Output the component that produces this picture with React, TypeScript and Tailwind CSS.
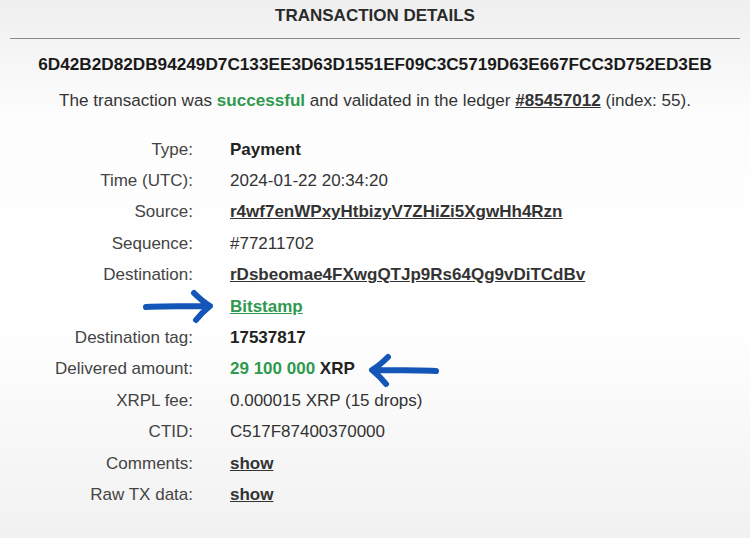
import { ReactNode } from 'react';

type Row = { label: string; value: ReactNode; arrow?: 'right' | 'left' };

const font = { fontFamily: '"Liberation Sans", Arial, sans-serif' };

// Hand-drawn style blue arrow
function Arrow({ dir }: { dir: 'right' | 'left' }) {
  return (
    <svg width="74" height="36" viewBox="0 0 74 36" className={dir === 'left' ? 'scale-x-[-1]' : ''}>
      <path
        d="M4 19 C 22 18, 44 18, 66 18 M52 5 C 58 11, 63 15, 68 18 C 63 22, 58 27, 54 32"
        fill="none"
        stroke="#1456b8"
        strokeWidth="6"
        strokeLinecap="round"
        strokeLinejoin="round"
      />
    </svg>
  );
}

const rows: Row[] = [
  { label: 'Type:', value: <b className="text-[#222]">Payment</b> },
  { label: 'Time (UTC):', value: '2024-01-22 20:34:20' },
  { label: 'Source:', value: <a className="font-bold underline text-[#333]">r4wf7enWPxyHtbizyV7ZHiZi5XgwHh4Rzn</a> },
  { label: 'Sequence:', value: '#77211702' },
  { label: 'Destination:', value: <a className="font-bold underline text-[#333]">rDsbeomae4FXwgQTJp9Rs64Qg9vDiTCdBv</a> },
  { label: '', value: <a className="font-bold underline text-[#2f9a4f]">Bitstamp</a>, arrow: 'right' },
  { label: 'Destination tag:', value: <b className="text-[#222]">17537817</b> },
  {
    label: 'Delivered amount:',
    value: (
      <span className="font-bold">
        <span className="text-[#2f9a4f]">29 100 000</span> <span className="text-[#222]">XRP</span>
      </span>
    ),
    arrow: 'left',
  },
  { label: 'XRPL fee:', value: '0.000015 XRP (15 drops)' },
  { label: 'CTID:', value: 'C517F87400370000' },
  { label: 'Comments:', value: <a className="font-bold underline text-[#333]">show</a> },
  { label: 'Raw TX data:', value: <a className="font-bold underline text-[#333]">show</a> },
];

export default function App() {
  return (
    <div
      style={font}
      className="w-[750px] h-[538px] overflow-hidden text-[#333] bg-[linear-gradient(to_bottom,#efefef,#fdfdfd_22%,#ffffff_60%,#f1f1f1)]"
    >
      <h1 className="pt-[6px] text-center text-[17px] font-bold text-[#2a2a2a] leading-[20px]">TRANSACTION DETAILS</h1>
      <div className="mx-[10px] mt-[12px] h-px bg-[#8a8a8a]" />
      <div className="mt-[15px] text-center text-[17.2px] font-bold text-[#1a1a1a] leading-[20px]">
        6D42B2D82DB94249D7C133EE3D63D1551EF09C3C5719D63E667FCC3D752ED3EB
      </div>
      <p className="mt-[17px] text-center text-[17.1px] leading-[20px] text-[#333]">
        The transaction was <span className="font-bold text-[#2f9a4f]">successful</span> and validated in the ledger{' '}
        <a className="font-bold underline text-[#333]">#85457012</a> (index: 55).
      </p>
      <div className="mt-[23px] flex flex-col text-[17px] leading-[20px]">
        {rows.map((r, i) => (
          <div key={i} className="relative flex h-[31.4px] items-center">
            <div className="w-[193px] text-right text-[#444]">{r.label}</div>
            <div className="pl-[37px] text-[#333]">{r.value}</div>
            {r.arrow === 'right' && (
              <div className="absolute left-[142px] top-[-3px]">
                <Arrow dir="right" />
              </div>
            )}
            {r.arrow === 'left' && (
              <div className="absolute left-[366px] top-[-2px]">
                <Arrow dir="left" />
              </div>
            )}
          </div>
        ))}
      </div>
    </div>
  );
}
